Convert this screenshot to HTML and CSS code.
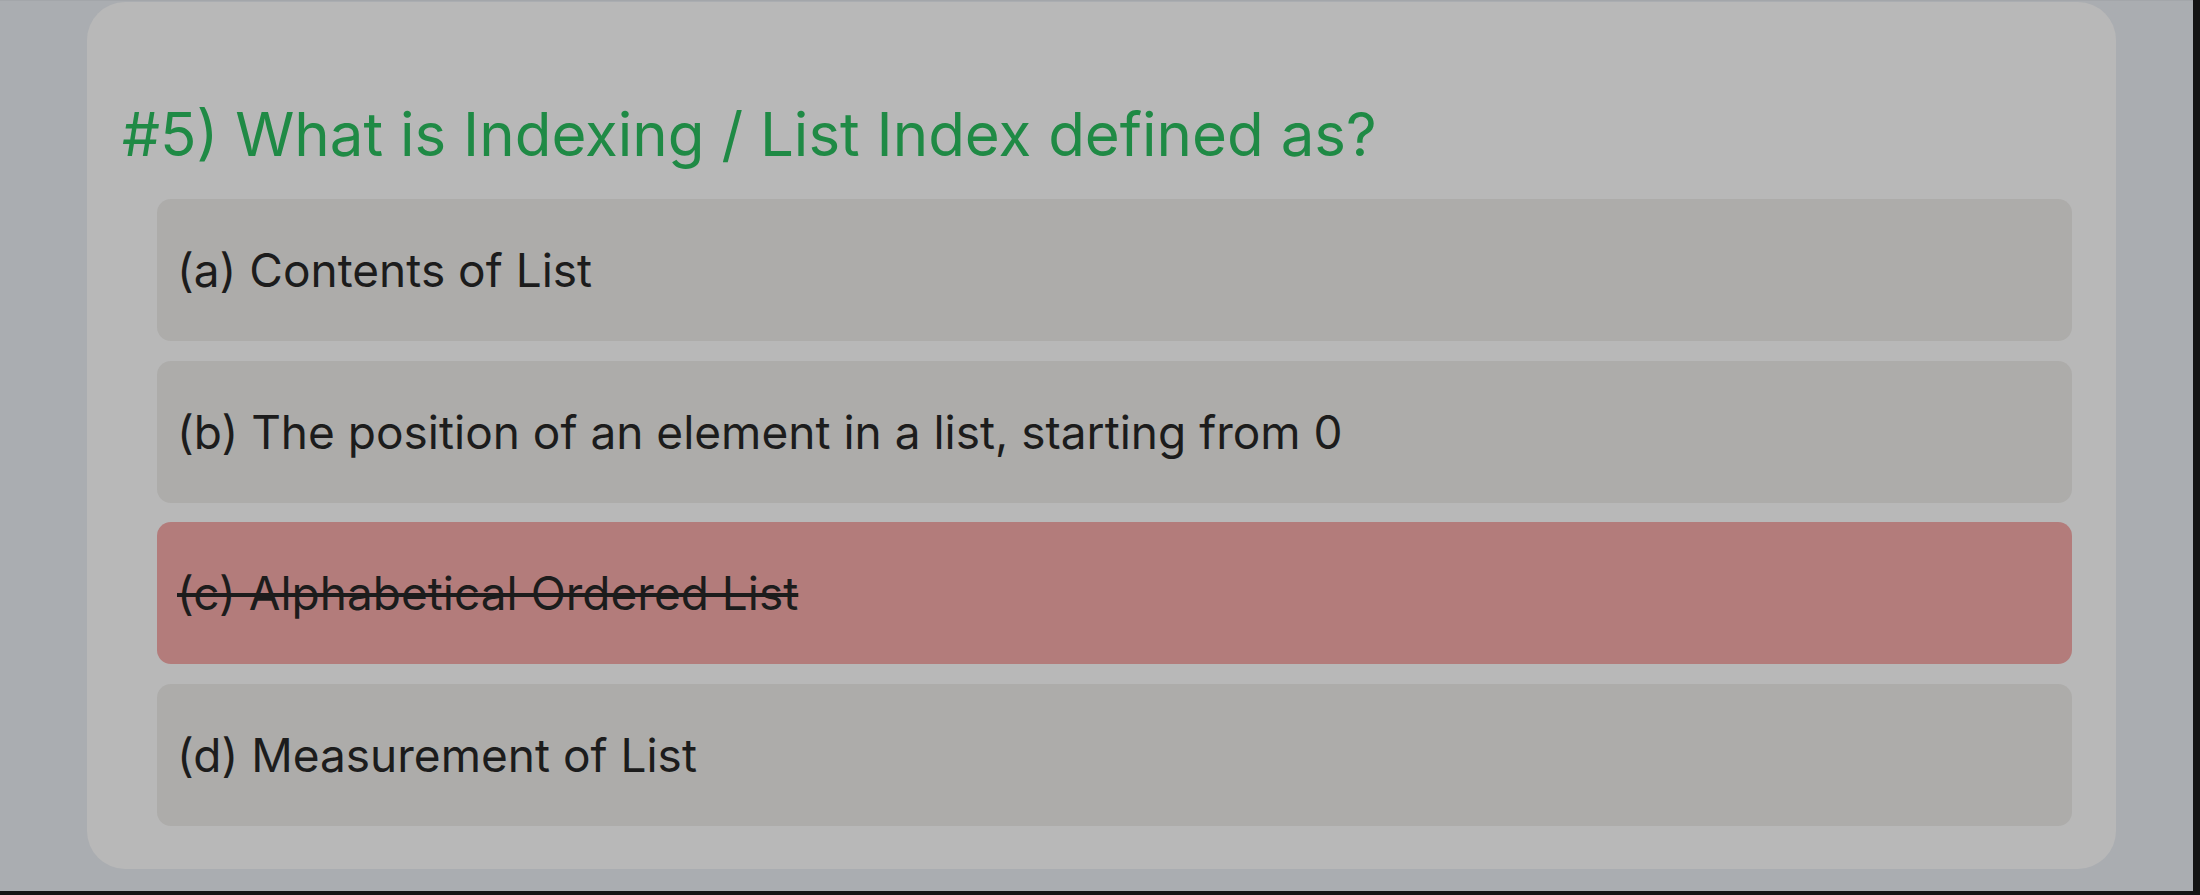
FILE: index.html
```html
<!DOCTYPE html>
<html lang="en">
<head>
<meta charset="utf-8">
<title>Quiz</title>
<link rel="stylesheet" href="styles.css">
</head>
<body>
<div class="page">
  <section class="card">
    <h2 class="question">#5) What is Indexing / List Index defined as?</h2>
    <ul class="options">
      <li class="option">(a) Contents of List</li>
      <li class="option">(b) The position of an element in a list, starting from 0</li>
      <li class="option option-wrong">(c) Alphabetical Ordered List</li>
      <li class="option">(d) Measurement of List</li>
    </ul>
  </section>
</div>
</body>
</html>
```

FILE: styles.css
```css
html, body {
  margin: 0;
  padding: 0;
}
body {
  background: #141414;
  width: 2200px;
  height: 895px;
  overflow: hidden;
  font-family: Inter, "Noto Sans", sans-serif;
}
.page {
  box-sizing: border-box;
  width: 2193px;
  height: 891px;
  background: #aaadb1;
  padding: 1px 0 0 87px;
  border-top: 1px solid #a3a6aa;
}
.card {
  box-sizing: border-box;
  width: 2029px;
  height: 867px;
  background: #b8b8b8;
  border-radius: 38px;
  padding: 96px 44px 0 30px;
}
.question {
  margin: 0 0 0 5px;
  font-size: 60px;
  line-height: 72px;
  font-weight: 400;
  color: #1f8a45;
}
.options {
  list-style: none;
  margin: 29px 0 0 0;
  padding: 0 0 0 40px;
  display: flex;
  flex-direction: column;
  gap: 19.5px;
}
.option {
  box-sizing: border-box;
  height: 142px;
  display: flex;
  align-items: center;
  padding-left: 20px;
  background: #adacaa;
  border-radius: 14px;
  font-size: 46px;
  line-height: 56px;
  color: #1c1c1c;
}
.option-wrong {
  background: #b37c7b;
  text-decoration: line-through;
  text-decoration-thickness: 4px;
}
```
